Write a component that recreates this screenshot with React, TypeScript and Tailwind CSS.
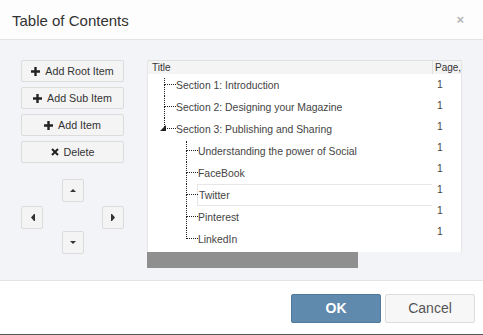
import React from "react";

const font = { fontFamily: '"Liberation Sans", Arial, sans-serif' };

type Item = { label: string; level: number; first?: boolean; last?: boolean; expander?: boolean; selected?: boolean };

const items: Item[] = [
  { label: "Section 1: Introduction", level: 0, first: true },
  { label: "Section 2: Designing your Magazine", level: 0 },
  { label: "Section 3: Publishing and Sharing", level: 0, last: true, expander: true },
  { label: "Understanding the power of Social", level: 1, first: true },
  { label: "FaceBook", level: 1 },
  { label: "Twitter", level: 1, selected: true },
  { label: "Pinterest", level: 1 },
  { label: "LinkedIn", level: 1, last: true },
];

function Btn({ icon, label }: { icon: React.ReactNode; label: string }) {
  return (
    <div className="h-[22px] w-[103px] flex items-center justify-center gap-[5px] bg-[#f4f4f4] border border-[#dcdcdc] rounded-[2px] text-[10.7px] text-[#333]">
      {icon}
      <span>{label}</span>
    </div>
  );
}

const Plus = () => (
  <svg width="9" height="9" viewBox="0 0 9 9"><path d="M3.3 0h2.4v3.3H9v2.4H5.7V9H3.3V5.7H0V3.3h3.3z" fill="#222" /></svg>
);
const Cross = () => (
  <svg width="8" height="8" viewBox="0 0 8 8"><path d="M1 1L7 7M7 1L1 7" stroke="#222" strokeWidth="2" /></svg>
);

function ArrowBtn({ dir }: { dir: "up" | "down" | "left" | "right" }) {
  const paths: Record<string, string> = {
    up: "M1 4L4 1L7 4Z",
    down: "M1 1L4 4L7 1Z",
    left: "M4 0L1 3.5L4 7Z M4 0H5V7H4Z",
    right: "M1 0L4 3.5L1 7Z M0 0H1V7H0Z",
  };
  const vert = dir === "up" || dir === "down";
  return (
    <div className="w-[22px] h-[23px] flex items-center justify-center bg-[#f4f4f4] border border-[#dcdcdc] rounded-[2px]">
      <svg width={vert ? 8 : 5} height={vert ? 5 : 7} viewBox={vert ? "0 0 8 5" : "0 0 5 7"}>
        <path d={paths[dir]} fill="#333" />
      </svg>
    </div>
  );
}

function TreeRow({ it }: { it: Item }) {
  return (
    <div className={"h-[22px] flex items-stretch " + (it.level === 0 ? "pl-[16px]" : "pl-[38px]")}>
      <div className="w-[12px] flex flex-col relative">
        <div className={(it.first && it.level === 0 ? "mt-[4px] h-[7px]" : it.first ? "mt-[1px] h-[10px]" : "h-[11px]") + " border-l border-b border-dotted border-[#222]"} />
        <div className={"h-[11px] " + (it.last ? "" : "border-l border-dotted border-[#222]")} />
        {it.expander && (
          <svg className="absolute left-[-4px] top-[7px]" width="6" height="6" viewBox="0 0 6 6">
            <path d="M6 0V6H0Z" fill="#222" />
          </svg>
        )}
      </div>
      {it.selected ? (
        <div className="flex-1 flex items-center pt-[1px] border-y border-l border-[#e6e6e6] text-[10.4px] text-[#444] -ml-[1px] pl-[1px]">
          {it.label}
        </div>
      ) : (
        <div className="flex-1 flex items-center pt-[1px] text-[10.4px] text-[#444] whitespace-nowrap overflow-hidden">{it.label}</div>
      )}
    </div>
  );
}

export default function App() {
  return (
    <div style={font} className="w-[483px] h-[335px] flex flex-col bg-white overflow-hidden">
      <div className="h-[40px] flex items-center justify-between pl-[12px] pr-[19px] pt-[3px] border-b border-[#e3e3e3] bg-[#fdfdfd]">
        <span className="text-[15px] text-[#333]">Table of Contents</span>
        <span className="text-[13px] font-bold text-[#b5b5b5] leading-none -mt-[3px]">×</span>
      </div>
      <div className="h-[241px] flex bg-[#f3f4f8] border-b border-[#e3e3e3] pt-[20px] pl-[21px]">
        <div className="w-[103px] flex flex-col gap-[5px]">
          <Btn icon={<Plus />} label="Add Root Item" />
          <Btn icon={<Plus />} label="Add Sub Item" />
          <Btn icon={<Plus />} label="Add Item" />
          <Btn icon={<Cross />} label="Delete" />
          <div className="mt-[11px] flex justify-center">
            <ArrowBtn dir="up" />
          </div>
          <div className="-mt-[1px] flex justify-between">
            <ArrowBtn dir="left" />
            <ArrowBtn dir="right" />
          </div>
          <div className="-mt-[3px] flex justify-center">
            <ArrowBtn dir="down" />
          </div>
        </div>
        <div className="ml-[23px] w-[315px] flex flex-col">
          <div className="flex h-[192px] bg-white border-l border-[#e6e6e6]">
            <div className="w-[284px] flex flex-col">
              <div className="h-[14px] bg-[#f4f4f4] border-t border-[#e0e0e0] text-[10px] text-[#333] pl-[4px] leading-[13px]">Title</div>
              {items.map((it) => (
                <TreeRow key={it.label} it={it} />
              ))}
            </div>
            <div className="w-[30px] flex flex-col border-r border-[#e6e6e6]">
              <div className="h-[14px] bg-[#f4f4f4] border-t border-l border-[#e0e0e0] text-[10px] text-[#333] pl-[2px] leading-[13px] whitespace-nowrap overflow-hidden">Page,</div>
              {items.map((it) => (
                <div key={it.label} className="h-[21px] flex items-center pl-[5px] text-[10.4px] text-[#444]">1</div>
              ))}
            </div>
          </div>
          <div className="h-[16px] w-[211px] bg-[#8f8f8f]" />
        </div>
      </div>
      <div className="flex-1 flex justify-end items-start pt-[13px] pr-[8px] gap-[4px]">
        <div className="w-[90px] h-[29px] flex items-center justify-center rounded-[2px] bg-[#5f8aad] border border-[#4f789b] text-white font-bold text-[14px]">OK</div>
        <div className="w-[90px] h-[29px] flex items-center justify-center rounded-[2px] bg-[#f7f7f7] border border-[#dcdcdc] text-[#555] text-[14px]">Cancel</div>
      </div>
      <div className="h-[1px] bg-[#555]" />
    </div>
  );
}
